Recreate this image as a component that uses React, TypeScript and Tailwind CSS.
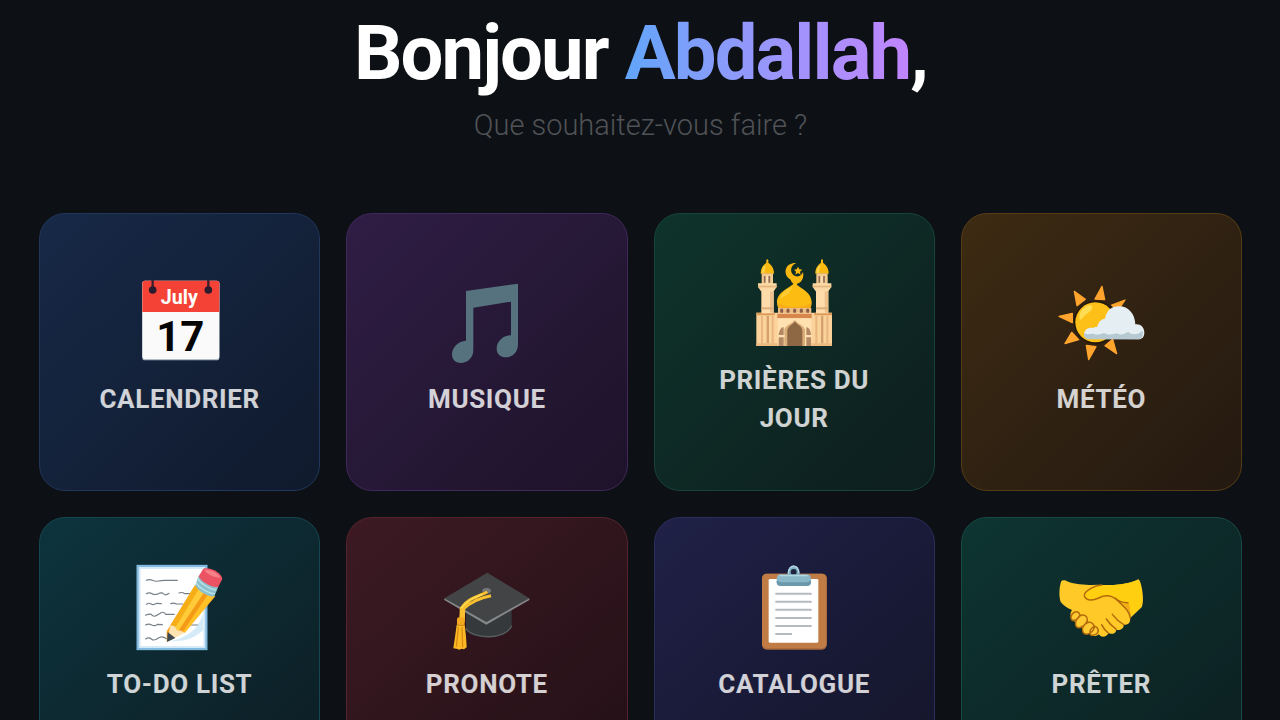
import type { ReactNode } from 'react'
import clsx from 'clsx'

type Tile = {
  id: string
  label: string
  icon: ReactNode
  className: string
}

function Icon({ viewBox, children }: { viewBox: string; children: ReactNode }) {
  return (
    <svg viewBox={viewBox} className="size-24" aria-hidden="true">
      {children}
    </svg>
  )
}

function CalendarIcon() {
  return (
    <Icon viewBox="35 24 288 288">
      <rect x="66" y="49" width="231" height="237" rx="8" fill="#b0bec5" />
      <rect x="66" y="47" width="231" height="235" rx="8" fill="#fafafa" />
      <path d="M66 141V55q0-8 8-8h215q8 0 8 8v86z" fill="#f44336" />
      <path d="M97 44v30M264 44v30" stroke="#3a2030" strokeWidth="7" />
      <circle cx="97" cy="75" r="11.500" fill="#2b1b2e" />
      <circle cx="264" cy="75" r="11.500" fill="#2b1b2e" />
      <text x="177" y="117" textAnchor="middle" fontSize="59" fontWeight="700" fill="#fff" className="font-[Roboto,sans-serif]">
        July
      </text>
      <text x="180" y="257" textAnchor="middle" fontSize="126" fontWeight="700" fill="#050505" className="font-[Roboto,sans-serif]">
        17
      </text>
    </Icon>
  )
}

function MusicIcon() {
  return (
    <Icon viewBox="26 24 288 288">
      <path
        d="M107 78 263 56V238c0 24-17 39-36 39-17 0-28-11-28-26 0-22 20-40 43-40V110L129 128V255c0 23-17 39-38 39-16 0-26-11-26-26 0-22 20-40 42-41z"
        fill="#56727f"
      />
    </Icon>
  )
}

function Minaret({ x }: { x: number }) {
  return (
    <g transform={`translate(${x} 0)`}>
      <path d="M-3 30q3-5 6 0v8c8 6 17 14 17 33H-20c0-19 9-27 17-33z" fill="#fbb90f" />
      <path d="M-10 49c-5 7-6 13-6 20h8c-1-8 0-14 4-21z" fill="#ffd54f" />
      <rect x="-17" y="70" width="34" height="32" fill="#f3c98f" />
      <path d="M-8 78v20M6 78v20" stroke="#8f6b57" strokeWidth="5" />
      <path d="M-1 77v22" stroke="#ffe4b8" strokeWidth="5" />
      <path d="M-28 100h56v11l-9 13h-38l-9-13z" fill="#fbd9a5" />
      <path d="M-28 107h56v5h-56z" fill="#e3b57d" />
      <rect x="-18" y="122" width="37" height="68" fill="#ffdcaa" />
      <path d="M8 124h11v64H8z" fill="#edc28d" />
      <path d="M-18 172h37v6h-37z" fill="#dcae7b" />
    </g>
  )
}

function MosqueIcon() {
  return (
    <Icon viewBox="32 12 288 288">
      <path d="M177 104q-10-7-11-15c-22-11-20-42 2-48 5-2 10-2 14-1-18 5-20 32-3 38 11 4 20-2 24-12 5 22-10 35-18 35q2 7-8 3z" fill="#fbb90f" />
      <path d="m188 50 4 8 9 1-7 6 2 9-8-5-8 5 2-9-6-6 8-1z" fill="#fbb90f" />
      <path d="M178 96c4 15 51 25 51 61 0 9-3 19-7 25h-89c-5-8-8-16-8-25 0-36 49-46 53-61z" fill="#fdbc12" />
      <path d="M139 135c9-14 23-21 32-24-8 17-16 27-37 34z" fill="#ffd94d" opacity=".6" />
      <path d="M127 158c24 16 75 18 101 0 0 9-2 18-7 24h-87c-4-6-7-15-7-24z" fill="#f5a51c" opacity=".7" />
      <rect x="128" y="174" width="100" height="19" fill="#e9bd86" />
      <path d="M139 186v-6M158 186v-6M178 186v-6M198 186v-6M217 186v-6" stroke="#8c5c49" strokeWidth="9" strokeLinecap="round" />
      <path d="M63 188h227v100H63z" fill="#fbd29a" />
      <path d="M63 188h55v8H63zM237 188h53v8h-53z" fill="#dc9a57" />
      <path d="M126 191h103v14H126z" fill="#d7874b" />
      <path d="M127 205h101v83H127z" fill="#ffe0b1" />
      <path d="M147 288v-47c0-14 24-20 31-31 8 11 31 17 31 31v47z" fill="#d8ad78" />
      <path d="M156 288v-46c0-13 17-18 23-28 5 10 22 15 22 28v46z" fill="#8e6844" />
      <path d="M130 288v-37q6-23 15-19v56zM213 288v-56q9-1 14 19v37z" fill="#b48863" />
      <path d="M128 255h20v7h-20zM210 255h19v7h-19z" fill="#ffe0b1" />
      <path d="M80 199v89M112 197v91M243 197v91M276 199v89" stroke="#e8b67e" strokeWidth="6" />
      <path d="M94 197h7v83h-7zM257 197h7v83h-7z" fill="#d4a06d" />
      <path d="M63 280h64v8H63zM228 280h62v8h-62z" fill="#edbb80" />
      <Minaret x={96} />
      <Minaret x={260} />
    </Icon>
  )
}

function WeatherIcon() {
  return (
    <Icon viewBox="40 24 288 288">
      <g fill="#ffa42d" stroke="#ffa42d" strokeWidth="4" strokeLinejoin="round">
        <path d="m104 79 33 24-25 19zM187 64l8 40-29-2zM256 105l-22 33-18-18zM58 154l40-9v28zM76 236l20-34 21 22zM147 284l-7-43 29 4zM231 266l-35-24 23-19z" />
      </g>
      <circle cx="167" cy="172" r="65" fill="#24180d" />
      <circle cx="167" cy="172" r="60" fill="#fdc019" />
      <path d="M120 166c-6-25 15-46 34-46 11 10-4 21-16 29-8 6-10 12-18 17z" fill="#ffdc55" />
      <path d="M146 222c-10-1-14-9-12-18 2-12 15-17 25-15 4-2 9-4 14-3 3-17 14-25 23-25 5-25 19-37 42-37 29 0 48 23 49 54 17-3 28 11 27 27-1 11-6 18-17 18z" fill="#e5eff3" />
      <path d="M134 204c8 7 20 1 29 3 11 4 21 0 30-3 14 8 27 4 38 1 13 8 26 0 34-5 12 11 28 10 44-3 2 17-3 26-15 26H146c-10-1-14-9-12-19z" fill="#b6c9d2" />
    </Icon>
  )
}

function TodoIcon() {
  return (
    <Icon viewBox="37 24 288 288">
      <rect x="54" y="48" width="206" height="249" fill="#fff" stroke="#82b9df" strokeWidth="7" />
      <rect x="60" y="54" width="194" height="237" fill="none" stroke="#cfe7f7" strokeWidth="5" />
      <g fill="none" stroke="#777f86" strokeWidth="3.500" strokeLinecap="round">
        <path d="M80 91q9-4 18 0t18 2 20-2 18 0h19M80 131q9-5 17 0t19 0 16 1 16-2M178 129q9-4 17 2h16M80 163q7-6 14-1t17-2l14 1M153 161q9-4 17 1h19M78 196q14-7 20 0t20-4 20 1h26M78 225q9-5 18 0t17-2l15 1M78 267q9-7 17 0t20-2 25 1M212 225h22" />
      </g>
      <path d="M151 274c50-12 83-32 99-82v49c-20 20-51 35-99 33z" fill="#b9def4" opacity=".6" />
      <path d="m141 244 85-138 61 33-92 108-54 28z" fill="#ffa51c" />
      <path d="m152 227 74-121 16 9-76 125z" fill="#f7ad16" />
      <path d="m166 234 73-119 17 9-80 119z" fill="#ffcb38" />
      <path d="m177 243 78-118 14 7-82 116z" fill="#f59a16" />
      <path d="m188 248 79-118 18 9-89 109z" fill="#ffc126" />
      <path d="m152 226 14 3 6 12 12 1 11 6-53 28z" fill="#ffe4b2" />
      <path d="m144 246 23 18-25 12z" fill="#3f4950" />
      <path d="m237 78 59 32-12 29c-16 4-49-15-57-33z" fill="#8bc1cd" />
      <path d="M234 85c8 16 38 34 56 35M229 97c9 17 37 34 57 34" fill="none" stroke="#b8e0e6" strokeWidth="4" />
      <path d="m237 79 14-23c20-7 56 13 57 31l-13 25c-20 0-49-14-58-33z" fill="#eb5262" />
      <path d="M254 60c17-5 42 9 49 23-22 0-39-9-49-23z" fill="#f78088" />
    </Icon>
  )
}

function GraduationIcon() {
  return (
    <Icon viewBox="36 24 288 288">
      <path d="M117 184v56c22 30 115 32 137-9v-50z" fill="#35393b" />
      <path d="M117 235c19 33 119 37 137-8" fill="none" stroke="#565b5e" strokeWidth="4" />
      <path d="M181 68 307 145 178 222 52 145z" fill="#454748" />
      <path d="m52 145 126 71 129-71v5l-129 74L52 150z" fill="#858889" />
      <path d="m56 145 125-74 122 74-125 70z" fill="#424445" />
      <ellipse cx="179" cy="122" rx="13" ry="8" fill="#777" />
      <path d="M181 126c-27 13-60 20-78 48l-2 43M192 137c-26 5-58 16-82 39l-1 39" fill="none" stroke="#fbc02d" strokeWidth="9" />
      <path d="M166 133c-28 12-45 18-63 41" fill="none" stroke="#ffdd58" strokeWidth="4" />
      <rect x="90" y="202" width="23" height="25" rx="6" fill="#f2a91e" />
      <path d="M89 224h24c3 22 5 46 6 68l-8 6-7-2-7 3-8-3-10-1c4-25 7-48 10-71z" fill="#fbb924" />
      <path d="m94 232-6 58M105 232l2 60" stroke="#dc8c12" strokeWidth="4" />
      <path d="M91 226h22" stroke="#d58f18" strokeWidth="4" />
    </Icon>
  )
}

function ClipboardIcon() {
  return (
    <Icon viewBox="33 24 288 288">
      <rect x="81" y="71" width="194" height="228" rx="14" fill="#a6683c" />
      <rect x="81" y="71" width="194" height="224" rx="14" fill="#c17b45" />
      <rect x="101" y="87" width="149" height="191" rx="4" fill="#fff" />
      <path d="M121 131h109M121 155h109M121 179h109M121 204h109M121 228h109M121 252h50" stroke="#b4bac0" strokeWidth="6" />
      <path d="M158 78c-3-42 38-42 35 0z" fill="#7fb0c2" />
      <circle cx="176" cy="66" r="9" fill="#20243f" />
      <path d="M136 73h79q13 0 13 16v8q0 11-14 11h-76q-13 0-13-11v-8q0-16 11-16z" fill="#8bb8c8" />
      <path d="M126 91q7 6 16 6h70q10 0 16-6v6q0 11-14 11h-76q-13 0-13-11z" fill="#6b98ab" />
      <path d="M160 69c1-26 29-28 32 0M135 77h81" fill="none" stroke="#b5d7e2" strokeWidth="4" strokeLinecap="round" />
    </Icon>
  )
}

function HandshakeIcon() {
  return (
    <Icon viewBox="38 24 288 288">
      <path d="M74 91c25 13 62 15 93 13 47 2 90 4 127-16 9 2 20 65 10 84l-35 33c3 16-10 21-19 19 1 14-14 18-22 15-2 15-18 14-24 10-5 14-22 14-29 4-8 10-28 5-29-7-14 1-24-8-22-22-15 2-25-8-23-20-11-1-14-13-6-24-17-7-26-15-34-24-6-21-4-44 1-61q2-5 12-4z" fill="#ffc928" />
      <path d="M184 106c38 1 76-4 109-16 10 9 18 62 9 82l-33 27c-9-24-31-37-49-57-25-10-50 6-73 11-10-9-18-15-11-25 14-10 32-19 48-22z" fill="#ffcf10" />
      <path d="M239 156c17 10 27 24 31 43 1-12 0-24-5-41z" fill="#f0a018" opacity=".7" />
      <g fill="none" stroke="#b26a0b" strokeWidth="4.500" strokeLinecap="round" strokeLinejoin="round">
        <path d="M184 105c-23 1-53 19-52 32 5 16 25 16 43 7 24-12 42-6 56 7 17 17 36 29 39 53M224 144c13 11 24 15 39 14" />
        <path d="M216 193c10 13 22 24 34 31M198 207c8 13 18 22 30 31M184 224c5 10 11 19 20 25" />
        <path d="M95 210c-10-12 8-32 21-21 8 9-11 27-21 21zM109 231c-13-18 15-48 29-31 11 15-15 39-29 31zM131 250c-15-16 12-45 27-28 12 15-12 37-27 28zM151 255c-8-15 13-37 21-19 5 11-3 22-21 19z" fill="#ffca32" />
      </g>
    </Icon>
  )
}

const tiles: Tile[] = [
  { id: 'calendar', label: 'Calendrier', icon: <CalendarIcon />, className: 'from-[#172947] to-[#101a2d] border-[#20365a]' },
  { id: 'music', label: 'Musique', icon: <MusicIcon />, className: 'from-[#301d45] to-[#1d1329] border-[#40285a]' },
  { id: 'prayers', label: 'Prières du jour', icon: <MosqueIcon />, className: 'from-[#0e342b] to-[#0d1e1e] border-[#174438]' },
  { id: 'weather', label: 'Météo', icon: <WeatherIcon />, className: 'from-[#3d2b12] to-[#241911] border-[#563c15]' },
  { id: 'todo', label: 'To-do list', icon: <TodoIcon />, className: 'from-[#0c343d] to-[#0d1e25] border-[#154650]' },
  { id: 'pronote', label: 'Pronote', icon: <GraduationIcon />, className: 'from-[#3d1a23] to-[#241017] border-[#56222d]' },
  { id: 'catalogue', label: 'Catalogue', icon: <ClipboardIcon />, className: 'from-[#1f2147] to-[#15152b] border-[#2b2d5b]' },
  { id: 'lend', label: 'Prêter', icon: <HandshakeIcon />, className: 'from-[#0d3532] to-[#0c2022] border-[#174a43]' },
]

export default function App() {
  return (
    <main className="h-screen overflow-hidden bg-[#0d1015] pr-[38px] pl-[39px] font-[Roboto,sans-serif]">
      <header className="pt-2 text-center">
        <h1 className="text-[76px] leading-[90px] font-bold tracking-tight text-white">
          Bonjour{' '}
          <span className="bg-linear-to-r from-[#60a5fa] to-[#c084fc] bg-clip-text text-transparent">Abdallah</span>,
        </h1>
        <p className="mt-[6px] text-[29px] leading-[42px] font-light text-[#505256]">Que souhaitez-vous faire ?</p>
      </header>

      <nav className="mt-[67px] grid grid-cols-4 gap-[26px]">
        {tiles.map((tile) => (
          <button
            key={tile.id}
            type="button"
            className={clsx(
              'flex flex-col items-center justify-center rounded-[26px] border bg-linear-to-br px-10 pt-10 pb-[53px]',
              tile.className
            )}
          >
            {tile.icon}
            <span className="mt-[11px] text-[26px] leading-[38px] font-bold tracking-wide text-white/80 uppercase">
              {tile.label}
            </span>
          </button>
        ))}
      </nav>
    </main>
  )
}
